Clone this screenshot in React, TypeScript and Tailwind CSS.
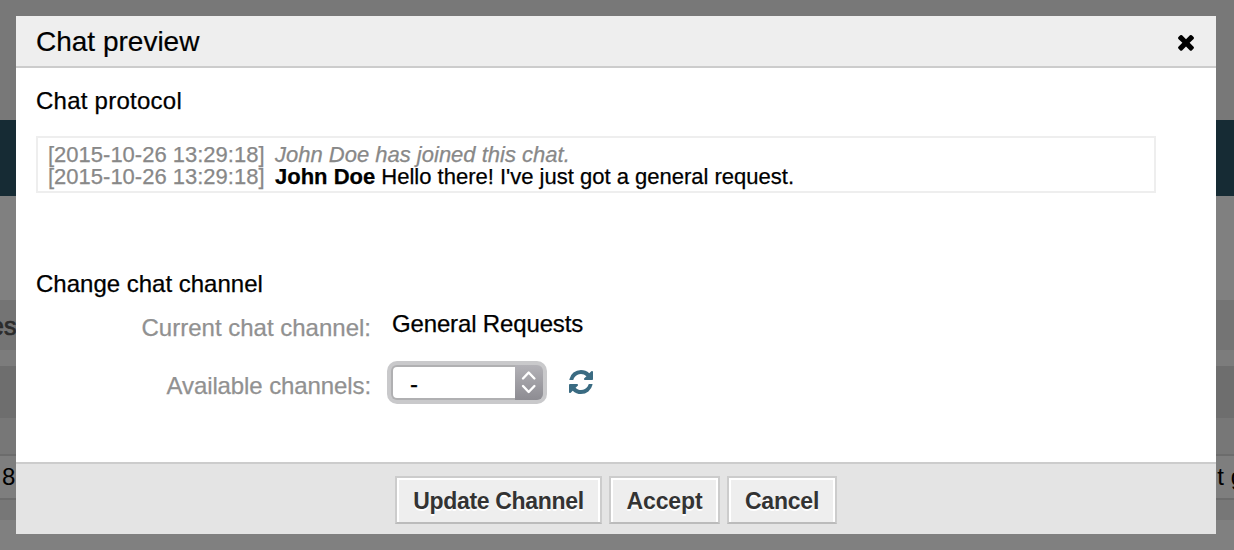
import type { ReactNode } from "react";

function CloseIcon() {
  return (
    <svg viewBox="0 0 1792 1792" className="block size-6" fill="currentColor" aria-hidden="true">
      <path d="M1490 1322q0 40-28 68l-136 136q-28 28-68 28t-68-28l-294-294-294 294q-28 28-68 28t-68-28l-136-136q-28-28-28-68t28-68l294-294-294-294q-28-28-28-68t28-68l136-136q28-28 68-28t68 28l294 294 294-294q28-28 68-28t68 28l136 136q28 28 28 68t-28 68l-294 294 294 294q28 28 28 68z" />
    </svg>
  );
}

function RefreshIcon() {
  return (
    <svg viewBox="0 0 1792 1792" className="block size-7" fill="currentColor" aria-hidden="true">
      <path d="M1639 1056q0 5-1 7-64 268-268 434.5t-478 166.5q-146 0-282.5-55t-243.500-157l-129 129q-19 19-45 19t-45-19-19-45v-448q0-26 19-45t45-19h448q26 0 45 19t19 45-19 45l-137 137q71 66 161 102t187 36q134 0 250-65t186-179q11-17 53-117 8-23 30-23h192q13 0 22.500 9.500t9.500 22.500zm25-800v448q0 26-19 45t-45 19h-448q-26 0-45-19t-19-45 19-45l138-138q-148-137-349-137-134 0-250 65t-186 179q-11 17-53 117-8 23-30 23h-199q-13 0-22.500-9.500t-9.500-22.500v-7q65-268 270-434.500t480-166.500q146 0 284 55.500t245 156.500l130-129q19-19 45-19t45 19 19 45z" />
    </svg>
  );
}

function Stepper() {
  return (
    <svg viewBox="0 0 28 34" className="block h-[34px] w-7" fill="none" stroke="#fff" strokeWidth="2.4" strokeLinecap="round" strokeLinejoin="round" aria-hidden="true">
      <path d="M8 13.500 13.700 7.500 19.400 13.500M8 21 13.700 27 19.400 21" />
    </svg>
  );
}

function FooterButton({ className, children }: { className: string; children: ReactNode }) {
  return (
    <button
      className={`h-12 border-2 border-[#ccc] border-b-[#bbb] bg-[#eee] pt-[3px] text-[23px] font-bold text-[#333] shadow-[inset_2px_2px_0_#fff,inset_-2px_0_0_#fff] [text-shadow:0_2px_0_#fff] ${className}`}
    >
      {children}
    </button>
  );
}

function Backdrop() {
  return (
    <div className="flex h-[550px] flex-col overflow-hidden bg-[#808080]">
      <div className="h-[120px] bg-[#787878]" />
      <div className="h-[76px] bg-[#162b34]" />
      <div className="h-[104px]" />
      <div className="h-[50px] bg-[#747474] text-[25px] leading-[52px] font-medium text-[#2b2b2b] [-webkit-text-stroke:0.7px]">
        <span className="-ml-[10px]">es</span>
      </div>
      <div className="h-4 bg-[#7c7c7c]" />
      <div className="h-[52px] bg-[#6e6e6e]" />
      <div className="h-9 bg-[#777]" />
      <div className="flex h-[46px] justify-between border-y-2 border-[#6c6c6c] bg-[#7e7e7e] pl-[2px] text-2xl leading-[42px] text-black">
        <span>8</span>
        <span className="-mr-[10px]">t g</span>
      </div>
      <div className="h-5 bg-[#777]" />
    </div>
  );
}

export default function App() {
  return (
    <div className="relative h-[550px] w-[1234px] overflow-hidden font-['Liberation_Sans',Arial,sans-serif] text-black">
      <Backdrop />
      <div role="dialog" className="absolute top-4 left-4 flex h-[518px] w-[1200px] flex-col bg-white">
        <header className="flex h-[52px] items-start justify-between border-b-2 border-[#ccc] bg-[#eee] pr-[18.5px] pl-5">
          <h1 className="text-[28px] leading-[51px] [-webkit-text-stroke:0.2px]">Chat preview</h1>
          <button aria-label="Close" className="mt-[14px]">
            <CloseIcon />
          </button>
        </header>

        <main className="flex-1 px-5 pt-[17px] text-2xl [-webkit-text-stroke:0.25px]">
          <h2 className="h-[51px] leading-8 tracking-[0.25px]">Chat protocol</h2>
          <div className="h-[57px] w-[1120px] border-2 border-[#eee] px-[10px] pt-[6px] text-[22px] leading-[22px]">
            <div className="flex">
              <span className="w-[227px] text-[#888]">[2015-10-26 13:29:18]</span>
              <em className="text-[#888]">John Doe has joined this chat.</em>
            </div>
            <div className="flex">
              <span className="w-[227px] text-[#888]">[2015-10-26 13:29:18]</span>
              <p>
                <strong>John Doe</strong> Hello there! I've just got a general request.
              </p>
            </div>
          </div>

          <h2 className="mt-[75px] leading-8">Change chat channel</h2>
          <div className="mt-2 flex h-[58px] items-start">
            <span className="mt-1 w-[335px] text-right leading-8 text-[#919191]">Current chat channel:</span>
            <span className="ml-[21px] leading-8 tracking-[-0.15px]">General Requests</span>
          </div>
          <div className="flex items-start">
            <span className="mt-1 w-[335px] text-right leading-8 tracking-[-0.1px] text-[#919191]">Available channels:</span>
            <button className="-mt-[5px] ml-[16px] flex h-[43px] w-40 items-center rounded-[10px] bg-[#c9c9cb] p-1">
              <span className="flex h-[35px] flex-1 items-center rounded-l-[6px] border-2 border-r-0 border-[#b0b0b2] bg-white pt-[2px] pl-[17px] text-left">-</span>
              <span className="h-[35px] w-7 rounded-r-[6px] bg-linear-to-b from-[#b3b2b7] to-[#8d8c92]">
                <Stepper />
              </span>
            </button>
            <button aria-label="Refresh" className="mt-[2px] ml-5 text-[#3a6b82]">
              <RefreshIcon />
            </button>
          </div>
        </main>

        <footer className="flex h-[72px] gap-[7px] border-t-2 border-[#ccc] bg-[#e4e4e4] pt-3 pl-[379px]">
          <FooterButton className="w-[207px] tracking-[-0.33px]">Update Channel</FooterButton>
          <FooterButton className="w-[111px] tracking-[-0.1px]">Accept</FooterButton>
          <FooterButton className="w-[110px] tracking-[-0.2px]">Cancel</FooterButton>
        </footer>
      </div>
    </div>
  );
}
